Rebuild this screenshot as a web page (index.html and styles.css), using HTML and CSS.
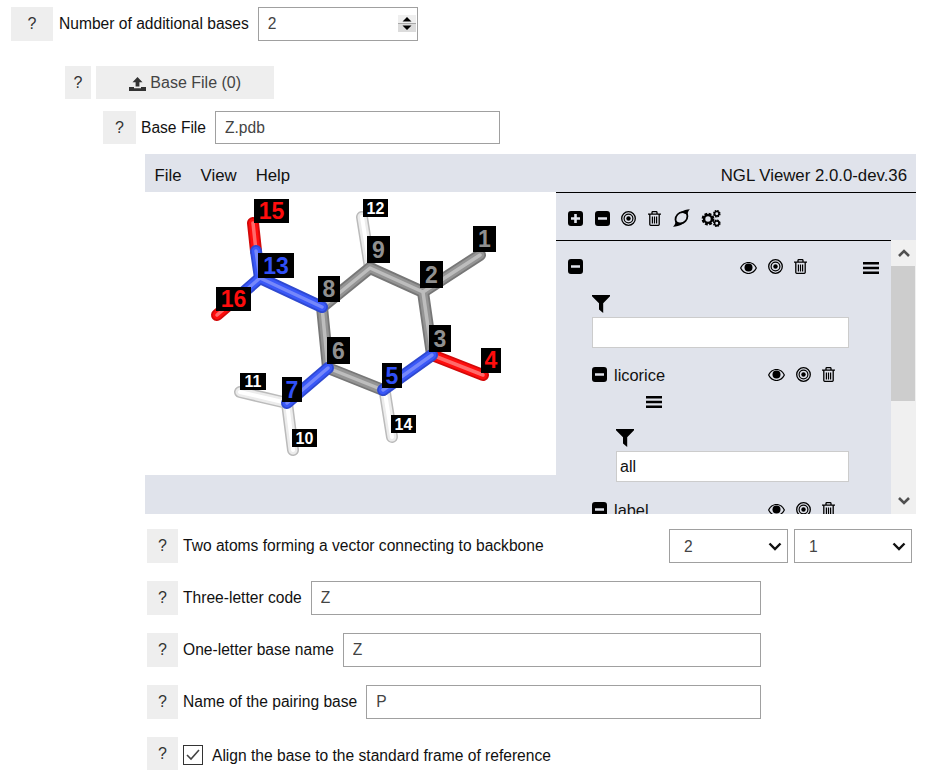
FILE: index.html
```html
<!DOCTYPE html>
<html lang="en">
<head>
    <meta charset="UTF-8">
    <title>Additional bases</title>
    <link rel="stylesheet" href="styles.css">
</head>
<body>

<svg class="defs" width="0" height="0">
    <symbol id="i-plus" viewBox="0 0 15 15">
        <path fill-rule="evenodd" d="M3 0h9a3 3 0 0 1 3 3v9a3 3 0 0 1-3 3H3a3 3 0 0 1-3-3V3a3 3 0 0 1 3-3zM6.200 3v3.200H3v2.600h3.200V12h2.600V8.800H12V6.200H8.800V3z"/>
    </symbol>
    <symbol id="i-minus" viewBox="0 0 15 15">
        <path fill-rule="evenodd" d="M3 0h9a3 3 0 0 1 3 3v9a3 3 0 0 1-3 3H3a3 3 0 0 1-3-3V3a3 3 0 0 1 3-3zM3 6.200v2.600h9V6.200z"/>
    </symbol>
    <symbol id="i-target" viewBox="0 0 15 15">
        <circle cx="7.500" cy="7.500" r="6.800" fill="none" stroke="#000" stroke-width="1.300"/>
        <circle cx="7.500" cy="7.500" r="4.400" fill="none" stroke="#000" stroke-width="1.200"/>
        <circle cx="7.500" cy="7.500" r="2.200"/>
    </symbol>
    <symbol id="i-trash" viewBox="0 0 13 15">
        <path fill="none" stroke="#000" stroke-width="1.300" d="M0 3.200h13M1.800 3.200v10a1.200 1.200 0 0 0 1.200 1.200h7a1.200 1.200 0 0 0 1.200-1.200v-10M4 3V1.400C4 .9 4.400.6 4.900.6h3.200c.5 0 .9.300.9.800V3"/>
        <path d="M3.800 5.500h1.200v7H3.800zM5.900 5.500h1.200v7H5.900zM8 5.500h1.200v7H8z"/>
    </symbol>
    <symbol id="i-storm" viewBox="0 0 17 18">
        <path fill="none" stroke="#000" stroke-width="1.800" d="M9.500 3.200c3 0 4.900 1.500 4.900 4 0 3.600-3 7.300-7 7.300-3 0-4.900-1.500-4.900-4 0-3.600 3-7.300 7-7.300z"/>
        <path d="M7.500 3C10.500 1.300 13.700.4 17 .2c-1.200 1-2.200 2.600-2.600 5.200zM9.500 15C6.500 16.700 3.300 17.600 0 17.800c1.200-1 2.200-2.600 2.600-5.200z"/>
    </symbol>
    <symbol id="i-cogs" viewBox="0 0 20 17">
        <circle cx="7" cy="9" r="5" fill="none" stroke="#000" stroke-width="2.800" stroke-dasharray="2.600 1.330"/>
        <circle cx="7" cy="9" r="3.900" fill="none" stroke="#000" stroke-width="2.400"/>
        <circle cx="15.800" cy="3.700" r="2.900" fill="none" stroke="#000" stroke-width="1.800" stroke-dasharray="1.500 .78"/>
        <circle cx="15.800" cy="3.700" r="2.200" fill="none" stroke="#000" stroke-width="1.500"/>
        <circle cx="15.800" cy="13.300" r="2.900" fill="none" stroke="#000" stroke-width="1.800" stroke-dasharray="1.500 .78"/>
        <circle cx="15.800" cy="13.300" r="2.200" fill="none" stroke="#000" stroke-width="1.500"/>
    </symbol>
    <symbol id="i-eye" viewBox="0 0 17 12">
        <path fill-rule="evenodd" d="M8.500 0C12.200 0 15.400 2.300 17 6c-1.600 3.700-4.800 6-8.500 6S1.600 9.700 0 6C1.600 2.300 4.800 0 8.500 0zM8.500 1.100C5.500 1.100 2.900 2.900 1.300 6c1.600 3.100 4.200 4.900 7.200 4.900s5.600-1.800 7.200-4.900c-1.600-3.100-4.200-4.900-7.200-4.900z"/>
        <circle cx="8.500" cy="5.600" r="4"/>
    </symbol>
    <symbol id="i-bars" viewBox="0 0 16 12">
        <path d="M0 0h16v2.400H0zM0 4.800h16v2.400H0zM0 9.600h16V12H0z"/>
    </symbol>
    <symbol id="i-filter" viewBox="0 0 18 18">
        <path d="M0 0h18v1.200l-6.800 7V18L7 14.500V8.200L0 1.200z"/>
    </symbol>
    <symbol id="i-upload" viewBox="0 0 17 14">
        <path fill="#333" d="M8.500 0l5 5.300h-3.100v4.300H6.600V5.300H3.500zM0 10h5v1.200h7V10h5v4H0z"/>
    </symbol>
</svg>

<div class="form">

    <div class="row row-count">
        <button class="help help-wide">?</button>
        <label class="label">Number of additional bases</label>
        <div class="count-box">
            <input class="field field-count" type="number" value="2">
            <svg class="spinner" width="18" height="17" viewBox="0 0 18 17">
                <rect width="18" height="8" fill="#efefef"/>
                <rect y="8" width="18" height="1" fill="#a8a8a8"/>
                <rect y="9" width="18" height="8" fill="#dcdcdc"/>
                <path d="M9 2l4.500 4.500h-9zM4.500 10.500h9L9 15z"/>
            </svg>
        </div>
    </div>

    <div class="row row-bases">
        <button class="help help-thin">?</button>
        <button class="add-button"><svg class="icon-upload"><use href="#i-upload"/></svg> Base File (0)</button>
    </div>

    <div class="row row-file">
        <button class="help help-mid">?</button>
        <label class="label">Base File</label>
        <input class="field field-grow" type="text" value="Z.pdb">
    </div>

    <div class="viewer">
        <div class="menu">
            <span class="menu-item">File</span>
            <span class="menu-item">View</span>
            <span class="menu-item">Help</span>
            <span class="menu-title">NGL Viewer 2.0.0-dev.36</span>
        </div>

        <div class="stage">
            <div class="canvas">
                <svg class="molecule" width="411" height="283" viewBox="145 192 411 283">
                    <defs>
                        <g id="bonds-grey">
                            <polyline points="322,307 370,268 423,292 480,255"/>
                            <polyline points="423,292 432,355"/>
                            <polyline points="322,307 328,368 383,390"/>
                        </g>
                        <g id="bonds-blue">
                            <polyline points="256,251 260,278 322,307"/>
                            <polyline points="260,278 238,297"/>
                            <polyline points="328,368 287,403"/>
                            <polyline points="383,390 432,355"/>
                        </g>
                        <g id="bonds-red">
                            <line x1="253" y1="223" x2="256" y2="251"/>
                            <line x1="238" y1="297" x2="217" y2="315"/>
                            <line x1="432" y1="355" x2="483" y2="375"/>
                        </g>
                        <g id="bonds-white">
                            <line x1="370" y1="268" x2="362" y2="217"/>
                            <polyline points="240,392 287,403 293,450"/>
                            <line x1="385" y1="393" x2="392" y2="437"/>
                        </g>
                    </defs>

                    <use href="#bonds-white" class="edge-white"/>
                    <use href="#bonds-white" class="mid-white"/>
                    <use href="#bonds-white" class="shine-white"/>
                    <use href="#bonds-grey" class="edge-grey"/>
                    <use href="#bonds-grey" class="mid-grey"/>
                    <use href="#bonds-grey" class="shine-grey"/>
                    <use href="#bonds-red" class="edge-red"/>
                    <use href="#bonds-red" class="mid-red"/>
                    <use href="#bonds-red" class="shine-red"/>
                    <use href="#bonds-blue" class="edge-blue"/>
                    <use href="#bonds-blue" class="mid-blue"/>
                    <use href="#bonds-blue" class="shine-blue"/>

                    <rect x="473" y="226" width="23" height="26"/><text class="atom atom-c" x="484.500" y="247">1</text>
                    <rect x="420" y="261" width="23" height="27"/><text class="atom atom-c" x="431.500" y="283">2</text>
                    <rect x="429" y="325" width="22" height="27"/><text class="atom atom-c" x="440" y="347">3</text>
                    <rect x="481" y="348" width="20" height="25"/><text class="atom atom-o" x="491" y="368">4</text>
                    <rect x="382" y="363" width="20" height="25"/><text class="atom atom-n" x="392" y="384">5</text>
                    <rect x="327" y="337" width="23" height="27"/><text class="atom atom-c" x="338.500" y="359">6</text>
                    <rect x="282" y="377" width="20" height="25"/><text class="atom atom-n" x="292" y="398">7</text>
                    <rect x="318" y="276" width="22" height="26"/><text class="atom atom-c" x="329" y="297">8</text>
                    <rect x="367" y="236" width="23" height="27"/><text class="atom atom-c" x="378.500" y="258">9</text>
                    <rect x="292" y="429" width="25" height="18"/><text class="atom-small" x="304.500" y="444">10</text>
                    <rect x="240" y="373" width="26" height="17"/><text class="atom-small" x="253" y="387">11</text>
                    <rect x="363" y="199" width="25" height="18"/><text class="atom-small" x="375.500" y="214">12</text>
                    <rect x="258" y="253" width="36" height="25"/><text class="atom atom-n" x="276" y="274">13</text>
                    <rect x="391" y="415" width="25" height="18"/><text class="atom-small" x="403.500" y="430">14</text>
                    <rect x="254" y="199" width="35" height="24"/><text class="atom atom-o" x="271.500" y="219">15</text>
                    <rect x="216" y="287" width="35" height="24"/><text class="atom atom-o" x="233.500" y="307">16</text>
                </svg>
            </div>

            <div class="sidebar">
                <div class="toolbar">
                    <svg class="icon icon-15"><use href="#i-plus"/></svg>
                    <svg class="icon icon-15 tool-minus"><use href="#i-minus"/></svg>
                    <svg class="icon icon-15 tool-target"><use href="#i-target"/></svg>
                    <svg class="icon icon-13 tool-trash"><use href="#i-trash"/></svg>
                    <svg class="icon icon-17 tool-storm"><use href="#i-storm"/></svg>
                    <svg class="icon icon-20 tool-cogs"><use href="#i-cogs"/></svg>
                </div>

                <div class="list-wrap">
                    <div class="list">
                        <div class="comp-row">
                            <svg class="icon icon-15"><use href="#i-minus"/></svg>
                            <svg class="icon icon-eye comp-eye"><use href="#i-eye"/></svg>
                            <svg class="icon icon-15 act-target"><use href="#i-target"/></svg>
                            <svg class="icon icon-13 act-trash"><use href="#i-trash"/></svg>
                            <svg class="icon icon-bars comp-bars"><use href="#i-bars"/></svg>
                        </div>
                        <div class="sele">
                            <svg class="icon icon-filter"><use href="#i-filter"/></svg>
                            <input class="sele-input sele-wide" type="text">
                        </div>

                        <div class="repr-row">
                            <svg class="icon icon-15"><use href="#i-minus"/></svg>
                            <span class="repr-name">licorice</span>
                            <svg class="icon icon-eye repr-eye"><use href="#i-eye"/></svg>
                            <svg class="icon icon-15 act-target"><use href="#i-target"/></svg>
                            <svg class="icon icon-13 act-trash"><use href="#i-trash"/></svg>
                        </div>
                        <svg class="icon icon-bars repr-bars"><use href="#i-bars"/></svg>
                        <div class="sele sele-repr">
                            <svg class="icon icon-filter"><use href="#i-filter"/></svg>
                            <input class="sele-input sele-narrow" type="text" value="all">
                        </div>

                        <div class="repr-row repr-last">
                            <svg class="icon icon-15"><use href="#i-minus"/></svg>
                            <span class="repr-name">label</span>
                            <svg class="icon icon-eye repr-eye"><use href="#i-eye"/></svg>
                            <svg class="icon icon-15 act-target"><use href="#i-target"/></svg>
                            <svg class="icon icon-13 act-trash"><use href="#i-trash"/></svg>
                        </div>
                    </div>

                    <div class="scrollbar">
                        <div class="scroll-btn">
                            <svg width="12" height="8" viewBox="0 0 12 8"><path class="chevron" d="M1 7l5-5 5 5"/></svg>
                        </div>
                        <div class="scroll-thumb"></div>
                        <div class="scroll-rest">
                            <svg width="12" height="8" viewBox="0 0 12 8"><path class="chevron" d="M1 1l5 5 5-5"/></svg>
                        </div>
                    </div>
                </div>
            </div>
        </div>
    </div>

    <div class="row row-param row-atoms">
        <button class="help help-param">?</button>
        <label class="label">Two atoms forming a vector connecting to backbone</label>
        <div class="atom-selects">
            <select class="pick pick-a"><option>2</option></select>
            <select class="pick pick-b"><option>1</option></select>
        </div>
    </div>

    <div class="row row-param">
        <button class="help help-param">?</button>
        <label class="label">Three-letter code</label>
        <input class="field field-grow" type="text" value="Z">
    </div>

    <div class="row row-param">
        <button class="help help-param">?</button>
        <label class="label">One-letter base name</label>
        <input class="field field-grow" type="text" value="Z">
    </div>

    <div class="row row-param">
        <button class="help help-param">?</button>
        <label class="label">Name of the pairing base</label>
        <input class="field field-grow" type="text" value="P">
    </div>

    <div class="row row-param row-check">
        <button class="help help-param">?</button>
        <input class="check" type="checkbox" checked>
        <label class="label check-label">Align the base to the standard frame of reference</label>
    </div>

</div>

</body>
</html>
```

FILE: styles.css
```css
*{
    margin:0;
    padding:0;
    box-sizing: border-box;
}

body{
    font-family: "Liberation Sans", Arial, sans-serif;
    font-size: 15.6px;
    color: #111;
    background-color: #fff;
}

.defs{
    display: block;
    height: 0;
}

.form{
    padding-top: 7px;
}

/* rows */
.row{
    display: flex;
    align-items: center;
    height: 34px;
}

.row-count{
    margin-left: 11px;
    width: 407px;
}

.row-bases{
    margin-left: 65px;
    margin-top: 25px;
    height: 33px;
}

.row-file{
    margin-left: 103px;
    margin-top: 12px;
    width: 397px;
    height: 33px;
}

.row-param{
    margin-left: 147px;
    margin-top: 18px;
    width: 614px;
}

.row-atoms{
    margin-top: 15px;
    width: 765px;
}

.row-check{
    height: 33px;
}

/* buttons and fields */
.help,.add-button{
    height: 100%;
    border: none;
    background-color: #eee;
    color: #333;
    font-family: inherit;
    font-size: 16px;
}

.help-wide{
    width: 42px;
}

.help-thin{
    width: 26px;
}

.help-mid{
    width: 33px;
}

.help-param{
    width: 31px;
}

.add-button{
    width: 178px;
    margin-left: 5px;
    color: #444;
}

.icon-upload{
    width: 17px;
    height: 14px;
    vertical-align: -3px;
}

.label{
    margin-left: 5px;
    white-space: nowrap;
}

.row-count .label{
    margin-left: 6px;
}

.field{
    height: 100%;
    margin-left: 9px;
    padding: 0 9px;
    border: 1px solid #a0a0a0;
    color: #444;
    font-family: inherit;
    font-size: 15.6px;
    background-color: #fff;
}

.count-box{
    position: relative;
    flex: 1;
    min-width: 0;
    height: 100%;
    margin-left: 9px;
}

.field-count{
    width: 100%;
    margin-left: 0;
    appearance: textfield;
}

.field-count::-webkit-inner-spin-button{
    display: none;
}

.spinner{
    position: absolute;
    right: 2px;
    top: 8px;
}

.field-grow{
    flex: 1;
    min-width: 0;
}

.atom-selects{
    display: flex;
    gap: 6px;
    margin-left: auto;
    height: 100%;
}

.pick{
    height: 100%;
    padding-left: 14px;
    border: 1px solid #a0a0a0;
    color: #444;
    font-family: inherit;
    font-size: 15.6px;
    appearance: none;
    background: #fff url("data:image/svg+xml,%3Csvg xmlns='http://www.w3.org/2000/svg' width='14' height='9'%3E%3Cpath d='M1.500 1.500L7 7l5.500-5.500' fill='none' stroke='%23111' stroke-width='2.400'/%3E%3C/svg%3E") no-repeat right 5px center;
}

.pick-a{
    width: 119px;
}

.pick-b{
    width: 118px;
}

.check{
    width: 20px;
    height: 20px;
    margin-left: 5px;
    margin-top: 3px;
    border: 1px solid #333;
    appearance: none;
    background: #fff url("data:image/svg+xml,%3Csvg xmlns='http://www.w3.org/2000/svg' width='14' height='12'%3E%3Cpath d='M1 6l4 4 8-9' fill='none' stroke='%23444' stroke-width='1.600'/%3E%3C/svg%3E") no-repeat center;
}

.check-label{
    margin-left: 9px;
    margin-top: 4px;
}

/* viewer */
.viewer{
    margin-left: 145px;
    margin-top: 10px;
    width: 771px;
    height: 360px;
    background-color: #e0e3eb;
}

.menu{
    display: flex;
    align-items: center;
    gap: 19px;
    height: 38px;
    padding: 5px 9px 0 9.500px;
    font-size: 16.8px;
}

.menu-title{
    margin-left: auto;
}

.stage{
    display: flex;
    height: 322px;
}

.canvas{
    width: 411px;
    height: 283px;
    background-color: #fff;
}

.molecule{
    display: block;
}

.molecule polyline,.molecule line{
    fill: none;
    stroke-linecap: round;
    stroke-linejoin: round;
}

.edge-grey{ stroke: #777; stroke-width: 12; }
.mid-grey{ stroke: #949494; stroke-width: 8.500; }
.shine-grey{ stroke: #bdbdbd; stroke-width: 3.500; }
.edge-blue{ stroke: #2f49d0; stroke-width: 12; }
.mid-blue{ stroke: #3a58f8; stroke-width: 8.500; }
.shine-blue{ stroke: #7688fa; stroke-width: 3.500; }
.edge-red{ stroke: #d20a0a; stroke-width: 12; }
.mid-red{ stroke: #ff0d0d; stroke-width: 8.500; }
.shine-red{ stroke: #ff6a6a; stroke-width: 3.500; }
.edge-white{ stroke: #bbb; stroke-width: 12; }
.mid-white{ stroke: #ececec; stroke-width: 9; }
.shine-white{ stroke: #fff; stroke-width: 4; }

.atom,.atom-small{
    font-family: "Liberation Sans", Arial, sans-serif;
    font-weight: bold;
    text-anchor: middle;
}

.atom{
    font-size: 23px;
}

.atom-small{
    font-size: 16px;
    fill: #fff;
}

.atom-c{ fill: #909090; }
.atom-n{ fill: #3050f8; }
.atom-o{ fill: #ff0d0d; }

/* side panel */
.sidebar{
    width: 360px;
    border-top: 1px solid #000;
}

.toolbar{
    display: flex;
    align-items: center;
    height: 47px;
    padding-left: 12px;
    padding-top: 3px;
}

.icon{
    display: block;
    flex: none;
}

.icon-15{
    width: 15px;
    height: 15px;
}

.icon-13{
    width: 13px;
    height: 15px;
}

.icon-17{
    width: 17px;
    height: 18px;
}

.icon-20{
    width: 20px;
    height: 17px;
}

.icon-eye{
    width: 17px;
    height: 12px;
}

.icon-bars{
    width: 16px;
    height: 12px;
}

.icon-filter{
    width: 18px;
    height: 18px;
}

.tool-minus{
    margin-left: 12px;
}

.tool-target{
    margin-left: 11px;
}

.tool-trash{
    margin-left: 12px;
}

.tool-storm{
    margin-left: 12px;
}

.tool-cogs{
    margin-left: 11px;
}

.list-wrap{
    display: flex;
    height: 274px;
}

.list{
    width: 335px;
    height: 274px;
    padding-top: 17px;
    border-top: 1px solid #000;
    overflow: hidden;
}

.comp-row{
    display: flex;
    align-items: center;
    height: 16px;
    padding-left: 12px;
}

.comp-eye{
    margin-left: 157px;
    margin-top: 3px;
}

.act-target{
    margin-left: 11px;
}

.act-trash{
    margin-left: 11px;
}

.comp-bars{
    margin-left: 56px;
    margin-top: 3px;
}

.sele{
    margin-left: 36px;
    margin-top: 21px;
}

.sele-repr{
    margin-left: 60px;
}

.sele-input{
    display: block;
    height: 31px;
    margin-top: 4px;
    padding-left: 3px;
    border: 1px solid #ccc;
    color: #111;
    font-family: inherit;
    font-size: 16px;
    background-color: #fff;
}

.sele-wide{
    width: 257px;
}

.sele-narrow{
    width: 233px;
}

.repr-row{
    display: flex;
    align-items: center;
    height: 15px;
    margin-top: 19px;
    margin-left: 36px;
}

.repr-last{
    margin-top: 20px;
}

.repr-name{
    width: 52px;
    margin-left: 7px;
    margin-top: 1px;
    font-size: 16.4px;
}

.repr-eye{
    margin-left: 102px;
    margin-top: 1px;
}

.repr-bars{
    margin-left: 90px;
    margin-top: 14px;
}

.scrollbar{
    display: flex;
    flex-direction: column;
    width: 25px;
    background-color: #f0f0f0;
}

.scroll-btn{
    display: flex;
    align-items: center;
    justify-content: center;
    height: 26px;
}

.scroll-thumb{
    width: 24px;
    height: 135px;
    background-color: #cdcdcd;
}

.scroll-rest{
    flex: 1;
    display: flex;
    align-items: flex-end;
    justify-content: center;
    padding-bottom: 9px;
}

.chevron{
    fill: none;
    stroke: #505050;
    stroke-width: 2.600;
}
```
